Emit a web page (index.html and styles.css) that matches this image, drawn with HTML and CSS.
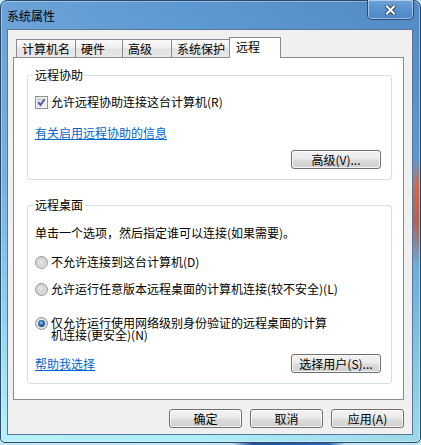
FILE: index.html
```html
<!DOCTYPE html>
<html lang="zh-CN">
<head>
<meta charset="utf-8">
<title>系统属性</title>
<link rel="stylesheet" href="styles.css">
</head>
<body>
<div class="window">
  <div class="titlebar">
    <span class="title">系统属性</span>
    <div class="close">
      <svg width="11" height="10" viewBox="0 0 11 10"><path d="M2 1.5 L9 8.5 M9 1.5 L2 8.5" fill="none" stroke="#2c3d55" stroke-width="4" stroke-linecap="square"/><path d="M2 1.5 L9 8.5 M9 1.5 L2 8.5" fill="none" stroke="#ffffff" stroke-width="2.2" stroke-linecap="square"/></svg>
    </div>
  </div>
  <div class="client">
    <div class="tabs">
      <div class="tab tab-name">计算机名</div>
      <div class="tab tab-hw">硬件</div>
      <div class="tab tab-adv">高级</div>
      <div class="tab tab-prot">系统保护</div>
      <div class="tab active">远程</div>
    </div>
    <div class="panel">
      <div class="group">
        <div class="group-title">远程协助</div>
        <div class="option opt-check">
          <svg class="box" width="13" height="13" viewBox="0 0 13 13"><defs><linearGradient id="cbg" x1="0" y1="0" x2="1" y2="1"><stop offset="0" stop-color="#cbcfd5"/><stop offset="1" stop-color="#f6f6f6"/></linearGradient></defs><rect x="0.5" y="0.5" width="12" height="12" fill="#f4f4f4" stroke="#8e8f8f"/><rect x="2" y="2" width="9" height="9" fill="url(#cbg)"/><path d="M3.3 6.3 L5.5 9 L9.6 3.2" fill="none" stroke="#43589a" stroke-width="1.8"/></svg>
          <span>允许远程协助连接这台计算机(R)</span>
        </div>
        <a class="link link-info">有关启用远程协助的信息</a>
        <button class="btn btn-wide btn-adv">高级(V)...</button>
      </div>
      <div class="group group-rdp">
        <div class="group-title">远程桌面</div>
        <div class="intro">单击一个选项，然后指定谁可以连接(如果需要)。</div>
        <div class="option radio-1">
          <svg class="box" width="13" height="13" viewBox="0 0 13 13"><defs><radialGradient id="rg1" cx="0.45" cy="0.45" r="0.6"><stop offset="0" stop-color="#e8e8e8"/><stop offset="0.6" stop-color="#d2d2d2"/><stop offset="1" stop-color="#f4f4f4"/></radialGradient></defs><circle cx="6.5" cy="6.5" r="6" fill="url(#rg1)" stroke="#8f9397"/></svg>
          <span>不允许连接到这台计算机(D)</span>
        </div>
        <div class="option radio-2">
          <svg class="box" width="13" height="13" viewBox="0 0 13 13"><defs><radialGradient id="rg2" cx="0.45" cy="0.45" r="0.6"><stop offset="0" stop-color="#e8e8e8"/><stop offset="0.6" stop-color="#d2d2d2"/><stop offset="1" stop-color="#f4f4f4"/></radialGradient></defs><circle cx="6.5" cy="6.5" r="6" fill="url(#rg2)" stroke="#8f9397"/></svg>
          <span>允许运行任意版本远程桌面的计算机连接(较不安全)(L)</span>
        </div>
        <div class="option radio-3">
          <svg class="box" width="13" height="13" viewBox="0 0 13 13"><defs><radialGradient id="rg3" cx="0.45" cy="0.45" r="0.6"><stop offset="0" stop-color="#f0f0f0"/><stop offset="1" stop-color="#d6d6d6"/></radialGradient><radialGradient id="dot" cx="0.45" cy="0.4" r="0.6"><stop offset="0" stop-color="#a6dcf8"/><stop offset="0.5" stop-color="#2f74bd"/><stop offset="1" stop-color="#163f78"/></radialGradient></defs><circle cx="6.5" cy="6.5" r="6" fill="url(#rg3)" stroke="#8f9397"/><circle cx="6.5" cy="6.5" r="3.4" fill="url(#dot)"/></svg>
          <span class="wrap-label">仅允许运行使用网络级别身份验证的远程桌面的计算机连接(更安全)(N)</span>
        </div>
        <div class="actions">
          <a class="link">帮助我选择</a>
          <button class="btn btn-wide">选择用户(S)...</button>
        </div>
      </div>
    </div>
    <div class="dialog-buttons">
      <button class="btn btn-dialog">确定</button>
      <button class="btn btn-dialog">取消</button>
      <button class="btn btn-dialog">应用(A)</button>
    </div>
  </div>
</div>
</body>
</html>
```
FILE: styles.css
```css
* { box-sizing: border-box; }
html, body { margin: 0; padding: 0; }
body {
  width: 421px;
  height: 445px;
  overflow: hidden;
  background: linear-gradient(90deg, #bfe9f6 0%, #bfe9f6 55%, #1f4f9a 60%, #2b67b5 78%, #bfe9f6 82%);
  font-family: "Noto Sans CJK SC", "Noto Sans", sans-serif;
  font-size: 12px;
  line-height: 14px;
  color: #000;
}
.window {
  width: 421px;
  height: 443px;
  border: 1px solid #2d4a6a;
  border-radius: 7px 7px 5px 5px;
  background:
    linear-gradient(180deg, rgba(220,100,60,0) 36%, rgba(220,100,60,0.85) 42%, rgba(200,80,50,0.8) 50%, rgba(220,120,80,0) 60%) right top / 8px 100% no-repeat,
    linear-gradient(90deg, rgba(255,255,255,0.10) 0%, rgba(255,255,255,0) 45%, rgba(0,20,80,0.10) 100%),
    linear-gradient(180deg, #5b97d2 0%, #5f9cd6 12%, #68a9dc 40%, #7cc6ea 65%, #98e0f4 85%, #b0effb 100%);
  box-shadow: inset 0 0 0 1px rgba(255,255,255,0.35);
  display: flex;
  flex-direction: column;
}
.titlebar {
  height: 28px;
  display: flex;
  justify-content: space-between;
  align-items: flex-start;
  padding: 0 6px 0 6px;
}
.title {
  padding-top: 8px;
  line-height: 14px;
  color: #000;
}
.close {
  width: 47px;
  height: 20px;
  margin-top: -1px;
  border: 1px solid #2a4c74;
  border-top: none;
  border-radius: 0 0 5px 5px;
  background: linear-gradient(180deg, #6ea3d8 0%, #5a92cf 50%, #4d87c8 100%);
  box-shadow: inset 0 0 0 1px rgba(255,255,255,0.45);
  display: flex;
  align-items: center;
  justify-content: center;
}
.client {
  margin: 0 7px 0 6px;
  border: 1px solid #56769a;
  background: #f0f0f0;
  padding: 7px 8px 6px 5px;
  display: flex;
  flex-direction: column;
}
.tabs {
  display: flex;
  align-items: flex-end;
  height: 21px;
  margin-bottom: -1px;
  padding-left: 3px;
  position: relative;
  z-index: 1;
}
.tab {
  height: 18px;
  margin-bottom: 1px;
  padding: 2px 0 0 5px;
  border: 1px solid #898c95;
  border-bottom: none;
  background: linear-gradient(180deg, #fbfbfb 0%, #efefef 45%, #e2e2e2 55%, #e8e8e8 100%);
  white-space: nowrap;
  line-height: 14px;
}
.tab + .tab { margin-left: -1px; }
.tab-name { width: 60px; }
.tab-hw { width: 48px; }
.tab-adv { width: 50px; }
.tab-prot { width: 61px; }
.tab.active {
  width: 52px;
  height: 21px;
  margin: 0 -2px 0 -3px;
  padding-left: 6px;
  background: #fff;
  position: relative;
  z-index: 2;
}
.panel {
  border: 1px solid #898c95;
  background: #fff;
  padding: 17px 11px 15px 13px;
  display: flex;
  flex-direction: column;
}
.group {
  border: 1px solid #d5dfe5;
  border-radius: 3px;
  padding: 0 10px 10px 7px;
  display: flex;
  flex-direction: column;
  align-items: flex-start;
}
.group-rdp { margin-top: 25px; }
.group-title {
  margin: -8px 0 0 -2px;
  padding: 0 2px;
  background: #fff;
  line-height: 14px;
}
.option {
  display: flex;
  align-items: center;
  gap: 3px;
  line-height: 14px;
}
.box { flex: none; display: block; }
.opt-check { margin-top: 13px; }
.link {
  color: #0066cc;
  text-decoration: underline;
  line-height: 14px;
  cursor: pointer;
}
.link-info { margin-top: 17px; }
.btn {
  height: 19px;
  border: 1px solid #707070;
  border-radius: 3px;
  background: linear-gradient(180deg, #f2f2f2 0%, #ebebeb 48%, #dddddd 52%, #cfcfcf 100%);
  box-shadow: inset 0 0 0 1px rgba(255,255,255,0.75);
  font-family: inherit;
  font-size: 12px;
  line-height: 16px;
  color: #000;
  padding: 0;
  text-align: center;
}
.btn-wide { width: 90px; }
.btn-adv { margin-top: 10px; align-self: flex-end; }
.intro { margin-top: 14px; line-height: 14px; }
.radio-1 { margin-top: 15px; }
.radio-2 { margin-top: 13px; }
.radio-3 { margin-top: 21px; align-items: flex-start; }
.wrap-label { width: 280px; line-height: 12px; }
.actions {
  margin-top: 13px;
  align-self: stretch;
  display: flex;
  justify-content: space-between;
  align-items: center;
}
.dialog-buttons {
  margin-top: 9px;
  display: flex;
  justify-content: flex-end;
  gap: 8px;
}
.btn-dialog { width: 73px; }
```
